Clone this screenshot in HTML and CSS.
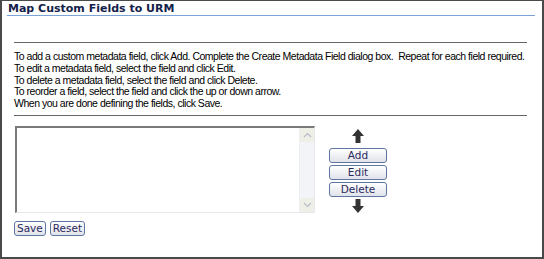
FILE: index.html
```html
<!DOCTYPE html>
<html lang="en">
<head>
    <meta charset="UTF-8">
    <title>Map Custom Fields to URM</title>
    <link rel="stylesheet" href="styles.css">
</head>
<body>
    <div class="frame">
        <h1 class="title">Map Custom Fields to URM</h1>
        <div class="content">
            <hr class="rule">
            <div class="help">
                To add a custom metadata field, click Add. Complete the Create Metadata Field dialog box.&nbsp; Repeat for each field required.<br>
                To edit a metadata field, select the field and click Edit.<br>
                To delete a metadata field, select the field and click Delete.<br>
                To reorder a field, select the field and click the up or down arrow.<br>
                When you are done defining the fields, click Save.
            </div>
            <hr class="rule">
            <div class="editor">
                <div class="listbox">
                    <div class="scrollbar">
                        <span class="scroll-btn">
                            <svg width="9" height="6" viewBox="0 0 9 6"><path d="M1 5 L4.5 1.5 L8 5" fill="none" stroke="#b8bcc8" stroke-width="1.2"/></svg>
                        </span>
                        <span class="scroll-track"></span>
                        <span class="scroll-btn">
                            <svg width="9" height="6" viewBox="0 0 9 6"><path d="M1 1 L4.5 4.5 L8 1" fill="none" stroke="#b8bcc8" stroke-width="1.2"/></svg>
                        </span>
                    </div>
                </div>
                <div class="actions">
                    <svg class="arrow" width="12" height="14" viewBox="0 0 12 14"><path d="M6 0 L12 7 L8.5 7 L8.5 14 L3.5 14 L3.5 7 L0 7 Z" fill="#333"/></svg>
                    <button class="btn btn-wide">Add</button>
                    <button class="btn btn-wide">Edit</button>
                    <button class="btn btn-wide">Delete</button>
                    <svg class="arrow" width="12" height="14" viewBox="0 0 12 14"><path d="M6 14 L12 7 L8.5 7 L8.5 0 L3.5 0 L3.5 7 L0 7 Z" fill="#333"/></svg>
                </div>
            </div>
            <div class="footer">
                <button class="btn">Save</button>
                <button class="btn">Reset</button>
            </div>
        </div>
    </div>
</body>
</html>
```

FILE: styles.css
```css
body {
    margin: 0;
    background: white;
}
.frame {
    width: 544px;
    height: 259px;
    box-sizing: border-box;
    border: 2px solid #4a4a4a;
    border-top-width: 1px;
    overflow: hidden;
}
.title {
    margin: 0 7px 0 5px;
    padding: 1px 0 0 1px;
    height: 13px;
    font-family: "DejaVu Sans", Verdana, sans-serif;
    font-size: 11px;
    font-weight: bold;
    color: #13224a;
    line-height: 13px;
    border-bottom: 1px solid #7ca3d6;
}
.content {
    padding: 0 15px 0 12px;
}
.rule {
    margin: 0;
    border: none;
    border-top: 1px solid #666;
}
.content > .rule:first-child {
    margin-top: 26px;
}
.help {
    padding: 8px 0 5px 0;
    font-family: "Liberation Sans", Arial, sans-serif;
    font-size: 10.5px;
    letter-spacing: -0.48px;
    line-height: 11.8px;
    white-space: nowrap;
    color: #000;
}
.editor {
    display: flex;
    align-items: flex-start;
    gap: 14px;
    margin-top: 10px;
    padding-left: 1px;
}
.listbox {
    width: 300px;
    height: 87px;
    box-sizing: border-box;
    border: 1px solid #e6e8ee;
    border-top: 2px solid #7a7a7a;
    border-left: 2px solid #7a7a7a;
    display: flex;
    justify-content: flex-end;
}
.scrollbar {
    width: 14px;
    display: flex;
    flex-direction: column;
    background: #f2f4f8;
    border-left: 1px solid #eceef3;
}
.scroll-btn {
    height: 14px;
    display: flex;
    align-items: center;
    justify-content: center;
    background: #eef0e8;
}
.scroll-track {
    flex: 1;
}
.actions {
    display: flex;
    flex-direction: column;
    align-items: center;
    gap: 2px;
    padding-top: 3px;
}
.arrow {
    display: block;
}
.actions .arrow:first-child {
    margin-bottom: 3px;
}
.btn {
    font-family: "DejaVu Sans", Verdana, sans-serif;
    font-size: 10.5px;
    color: #2b2b5e;
    padding: 0 2px;
    height: 15px;
    line-height: 12px;
    border: 1px solid #5f77a0;
    border-radius: 3px;
    background: linear-gradient(#ffffff, #e0e3ea);
    cursor: pointer;
}
.btn-wide {
    width: 58px;
}
.footer {
    display: flex;
    gap: 4px;
    margin-top: 8px;
}
```
